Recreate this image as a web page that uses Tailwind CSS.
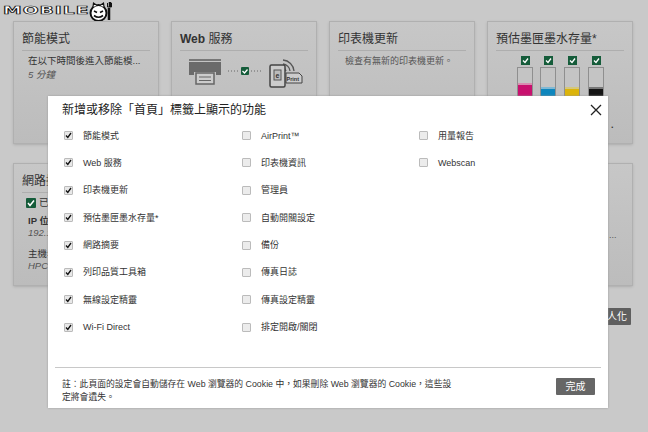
<!DOCTYPE html>
<html lang="zh-Hant">
<head>
  <meta charset="UTF-8" />
  <title>HP EWS</title>
  <script src="https://cdn.jsdelivr.net/npm/@tailwindcss/browser@4"></script>
</head>
<body class="relative w-[648px] h-[432px] overflow-hidden bg-[#c9c9c9] text-[#333] font-['Liberation_Sans','Noto_Sans_CJK_TC',sans-serif]">
  <!-- Logo -->
  <div class="flex items-start h-[21px] pl-[3px]">
    <div class="w-[85px] h-[12px] mt-[5px]">
      <span class="block w-[50px] origin-left scale-x-[1.7] text-[11px] leading-[12px] font-bold tracking-[0.6px] text-white [-webkit-text-stroke:0.7px_#111] [font-family:'DejaVu_Sans',sans-serif]">MOBILE</span>
    </div>
    <svg width="26" height="21" viewBox="0 0 26 21" class="mt-[1px]">
      <circle cx="10.500" cy="12" r="8" fill="#fff" stroke="#111" stroke-width="2"/>
      <path d="M5 6L5.500 2L9 4.500M16 6L15.500 2L12 4.500" fill="#fff" stroke="#111" stroke-width="1.200"/>
      <path d="M6 10l3 1.500M15 10l-3 1.500M6 14.500q4.500 3.500 9 0" fill="none" stroke="#111" stroke-width="1.600"/>
      <path d="M22 1v5M21 7v12" fill="none" stroke="#111" stroke-width="2.500"/>
      <path d="M19.500 2v4h4V2" fill="none" stroke="#111" stroke-width="1"/>
    </svg>
  </div>

  <!-- Cards -->
  <div class="grid grid-cols-[146px_146px_146px_146px] gap-x-3 gap-y-[19px] pl-[13px]">
    <div class="h-[123px] border border-[#b0b0b0] bg-gradient-to-b from-[#c7c7c7] to-[#bcbcbc] px-2 pt-2 shadow-sm">
      <h3 class="text-[12px] leading-[19px] pb-[1px] border-b border-[#aeaeae] text-[#333]">節能模式</h3>
      <p class="mt-[3px] pl-[6px] text-[9.500px] leading-[14px]">在以下時間後進入節能模...</p>
      <p class="pl-[6px] text-[9.500px] leading-[13px] italic text-[#555]">5 分鐘</p>
    </div>
    <div class="h-[123px] border border-[#b0b0b0] bg-gradient-to-b from-[#c7c7c7] to-[#bcbcbc] px-2 pt-2 shadow-sm">
      <h3 class="text-[12px] leading-[19px] pb-[1px] border-b border-[#aeaeae] font-bold">Web <span class="font-normal">服務</span></h3>
      <div class="flex items-start mt-[6px] ml-[9px]">
        <!-- printer -->
        <svg width="33" height="30" viewBox="0 0 33 30" class="mt-[2px]">
          <rect x="0" y="0" width="32" height="2" fill="#777"/>
          <path d="M0 3h32v13h-5v-3H5v3H0z" fill="#6a6a6a"/>
          <rect x="7" y="14" width="18" height="11" fill="#ccc" stroke="#666" stroke-width="1.500"/>
          <path d="M10 18h12M10 21.500h12" stroke="#666" stroke-width="1"/>
        </svg>
        <div class="flex items-center gap-[2px] mt-[10px] ml-[6px]">
          <svg width="11" height="8" viewBox="0 0 11 8"><path d="M0 4h11" stroke="#666" stroke-width="1" stroke-dasharray="1 2"/></svg>
          <svg width="8" height="8" viewBox="0 0 8 8"><rect width="8" height="8" rx="1" fill="#155c3a"/><path d="M1.500 4l2 2 3-3.500" fill="none" stroke="#fff" stroke-width="1.300"/></svg>
          <svg width="11" height="8" viewBox="0 0 11 8"><path d="M0 4h11" stroke="#666" stroke-width="1" stroke-dasharray="1 2"/></svg>
        </div>
        <!-- phone with print tag -->
        <svg width="34" height="32" viewBox="0 0 34 32" class="ml-[7px]">
          <path d="M14 3a12 12 0 0 1 11 11M14 7a8 8 0 0 1 7 7M14 11a4 4 0 0 1 3 3" fill="none" stroke="#555" stroke-width="1.300"/>
          <rect x="1" y="8" width="15" height="22" rx="1.500" fill="#ccc" stroke="#444" stroke-width="1.500"/>
          <rect x="5" y="13" width="7" height="10" fill="#bbb" stroke="#555"/>
          <text x="6.500" y="21" font-size="7" font-weight="700" fill="#333">e</text>
          <path d="M17 16h13l3 3v7H17z" fill="#ccc" stroke="#444"/>
          <text x="17.500" y="24" font-size="5.500" font-weight="700" fill="#333">Print</text>
        </svg>
      </div>
    </div>
    <div class="h-[123px] border border-[#b0b0b0] bg-gradient-to-b from-[#c7c7c7] to-[#bcbcbc] px-2 pt-2 shadow-sm">
      <h3 class="text-[12px] leading-[19px] pb-[1px] border-b border-[#aeaeae]">印表機更新</h3>
      <p class="mt-[3px] pl-[7px] text-[9px] leading-[14px] text-[#555]">檢查有無新的印表機更新。</p>
    </div>
    <div class="relative h-[123px] border border-[#b0b0b0] bg-gradient-to-b from-[#c7c7c7] to-[#bcbcbc] px-2 pt-2 shadow-sm">
      <h3 class="text-[12px] leading-[19px] pb-[1px] border-b border-[#aeaeae]">預估墨匣墨水存量*</h3>
      <div class="flex mt-[5px] ml-[21px] gap-x-[7px]">
        <div class="flex flex-col items-center w-[16px] gap-[2px]">
          <svg width="9" height="9" viewBox="0 0 9 9"><rect width="9" height="9" fill="#155c3a"/><path d="M2 4.500l2 2 3-4" fill="none" stroke="#fff" stroke-width="1.300"/></svg>
          <div class="w-[16px] h-[60px] border border-[#8f8f8f] bg-[#c4c4c4] pt-[15px]"><div class="h-full bg-[#c8106e] border-t-[2px] border-[#d98bb0]"></div></div>
        </div>
        <div class="flex flex-col items-center w-[16px] gap-[2px]">
          <svg width="9" height="9" viewBox="0 0 9 9"><rect width="9" height="9" fill="#155c3a"/><path d="M2 4.500l2 2 3-4" fill="none" stroke="#fff" stroke-width="1.300"/></svg>
          <div class="w-[16px] h-[60px] border border-[#8f8f8f] bg-[#c4c4c4] pt-[19px]"><div class="h-full bg-[#0e86bd] border-t-[2px] border-[#7fb8d4]"></div></div>
        </div>
        <div class="flex flex-col items-center w-[16px] gap-[2px] ml-[1px]">
          <svg width="9" height="9" viewBox="0 0 9 9"><rect width="9" height="9" fill="#155c3a"/><path d="M2 4.500l2 2 3-4" fill="none" stroke="#fff" stroke-width="1.300"/></svg>
          <div class="w-[16px] h-[60px] border border-[#8f8f8f] bg-[#c4c4c4] pt-[19px]"><div class="h-full bg-[#dcb40a] border-t-[2px] border-[#d4c77c]"></div></div>
        </div>
        <div class="flex flex-col items-center w-[16px] gap-[2px] ml-[1px]">
          <svg width="9" height="9" viewBox="0 0 9 9"><rect width="9" height="9" fill="#155c3a"/><path d="M2 4.500l2 2 3-4" fill="none" stroke="#fff" stroke-width="1.300"/></svg>
          <div class="w-[16px] h-[60px] border border-[#8f8f8f] bg-[#c4c4c4] pt-[19px]"><div class="h-full bg-[#151515] border-t-[2px] border-[#777]"></div></div>
        </div>
      </div>
      <span class="absolute left-[123px] top-[97px] text-[9px] leading-[12px] font-bold">.</span>
    </div>

    <div class="h-[123px] border border-[#b0b0b0] bg-gradient-to-b from-[#c7c7c7] to-[#bcbcbc] px-2 pt-2 shadow-sm">
      <h3 class="text-[12px] leading-[19px] pb-[1px] border-b border-[#aeaeae]">網路摘要</h3>
      <div class="flex items-center gap-[3px] mt-[4px] pl-[4px] text-[10px] leading-[12px]">
        <svg width="10" height="10" viewBox="0 0 10 10"><rect width="10" height="10" rx="1" fill="#155c3a"/><path d="M2 5l2 2.500 4-5" fill="none" stroke="#fff" stroke-width="1.500"/></svg>
        <span>已連線</span>
      </div>
      <p class="mt-[6px] pl-[6px] text-[9.500px] leading-[12px] font-bold">IP 位址</p>
      <p class="pl-[6px] text-[9.500px] leading-[12px] italic text-[#555]">192.168.1.10</p>
      <p class="mt-[9px] pl-[6px] text-[9.500px] leading-[12px]">主機名稱</p>
      <p class="pl-[6px] text-[9.500px] leading-[12px] italic text-[#555]">HPC5</p>
    </div>
    <div class="h-[123px] border border-[#b0b0b0] bg-[#c2c2c2]"></div>
    <div class="h-[123px] border border-[#b0b0b0] bg-[#c2c2c2]"></div>
    <div class="h-[123px] border border-[#b0b0b0] bg-gradient-to-b from-[#c7c7c7] to-[#bcbcbc] shadow-sm pt-[65px] pl-[121px] text-[9px] leading-[12px] text-[#555]">...</div>
  </div>

  <div class="flex justify-end pr-[17px] mt-[22px]">
    <button class="h-[17px] w-[60px] px-1 text-right text-[10px] leading-[17px] text-white bg-[#5f5f5f] rounded-[1px]">個人化</button>
  </div>

  <!-- Modal -->
  <div class="absolute left-[48px] top-[96px] w-[560px] h-[312px] bg-white shadow-[0_0_2px_#999] flex flex-col">
    <div class="flex items-start justify-between h-[31.500px] pl-[14px] pr-[5px] pt-[6px]">
      <h2 class="text-[12px] leading-[17px] text-[#222]">新增或移除「首頁」標籤上顯示的功能</h2>
      <svg width="14" height="14" viewBox="0 0 14 14" class="mt-[1px]"><path d="M2 2l10 10M12 2L2 12" stroke="#222" stroke-width="1.300"/></svg>
    </div>
    <div class="grid grid-cols-[178px_177px_1fr] grid-rows-[repeat(8,27.400px)] grid-flow-col pl-[16px] flex-1 text-[9px] leading-[14px] text-[#333]">
      <label class="flex items-center gap-[10px] h-[16px]"><span class="flex items-center justify-center w-[9px] h-[9px] rounded-[1px] border border-[#bbb] bg-[#e8e8e8]"><svg width="7" height="7" viewBox="0 0 7 7"><path d="M1 3.500l1.800 2L6 1" fill="none" stroke="#111" stroke-width="1.300"/></svg></span>節能模式</label>
      <label class="flex items-center gap-[10px] h-[16px]"><span class="flex items-center justify-center w-[9px] h-[9px] rounded-[1px] border border-[#bbb] bg-[#e8e8e8]"><svg width="7" height="7" viewBox="0 0 7 7"><path d="M1 3.500l1.800 2L6 1" fill="none" stroke="#111" stroke-width="1.300"/></svg></span>Web 服務</label>
      <label class="flex items-center gap-[10px] h-[16px]"><span class="flex items-center justify-center w-[9px] h-[9px] rounded-[1px] border border-[#bbb] bg-[#e8e8e8]"><svg width="7" height="7" viewBox="0 0 7 7"><path d="M1 3.500l1.800 2L6 1" fill="none" stroke="#111" stroke-width="1.300"/></svg></span>印表機更新</label>
      <label class="flex items-center gap-[10px] h-[16px]"><span class="flex items-center justify-center w-[9px] h-[9px] rounded-[1px] border border-[#bbb] bg-[#e8e8e8]"><svg width="7" height="7" viewBox="0 0 7 7"><path d="M1 3.500l1.800 2L6 1" fill="none" stroke="#111" stroke-width="1.300"/></svg></span>預估墨匣墨水存量*</label>
      <label class="flex items-center gap-[10px] h-[16px]"><span class="flex items-center justify-center w-[9px] h-[9px] rounded-[1px] border border-[#bbb] bg-[#e8e8e8]"><svg width="7" height="7" viewBox="0 0 7 7"><path d="M1 3.500l1.800 2L6 1" fill="none" stroke="#111" stroke-width="1.300"/></svg></span>網路摘要</label>
      <label class="flex items-center gap-[10px] h-[16px]"><span class="flex items-center justify-center w-[9px] h-[9px] rounded-[1px] border border-[#bbb] bg-[#e8e8e8]"><svg width="7" height="7" viewBox="0 0 7 7"><path d="M1 3.500l1.800 2L6 1" fill="none" stroke="#111" stroke-width="1.300"/></svg></span>列印品質工具箱</label>
      <label class="flex items-center gap-[10px] h-[16px]"><span class="flex items-center justify-center w-[9px] h-[9px] rounded-[1px] border border-[#bbb] bg-[#e8e8e8]"><svg width="7" height="7" viewBox="0 0 7 7"><path d="M1 3.500l1.800 2L6 1" fill="none" stroke="#111" stroke-width="1.300"/></svg></span>無線設定精靈</label>
      <label class="flex items-center gap-[10px] h-[16px]"><span class="flex items-center justify-center w-[9px] h-[9px] rounded-[1px] border border-[#bbb] bg-[#e8e8e8]"><svg width="7" height="7" viewBox="0 0 7 7"><path d="M1 3.500l1.800 2L6 1" fill="none" stroke="#111" stroke-width="1.300"/></svg></span>Wi-Fi Direct</label>

      <label class="flex items-center gap-[10px] h-[16px]"><span class="w-[9px] h-[9px] rounded-[1px] border border-[#bbb] bg-[#ececec]"></span>AirPrint™</label>
      <label class="flex items-center gap-[10px] h-[16px]"><span class="w-[9px] h-[9px] rounded-[1px] border border-[#bbb] bg-[#ececec]"></span>印表機資訊</label>
      <label class="flex items-center gap-[10px] h-[16px]"><span class="w-[9px] h-[9px] rounded-[1px] border border-[#bbb] bg-[#ececec]"></span>管理員</label>
      <label class="flex items-center gap-[10px] h-[16px]"><span class="w-[9px] h-[9px] rounded-[1px] border border-[#bbb] bg-[#ececec]"></span>自動開關設定</label>
      <label class="flex items-center gap-[10px] h-[16px]"><span class="w-[9px] h-[9px] rounded-[1px] border border-[#bbb] bg-[#ececec]"></span>備份</label>
      <label class="flex items-center gap-[10px] h-[16px]"><span class="w-[9px] h-[9px] rounded-[1px] border border-[#bbb] bg-[#ececec]"></span>傳真日誌</label>
      <label class="flex items-center gap-[10px] h-[16px]"><span class="w-[9px] h-[9px] rounded-[1px] border border-[#bbb] bg-[#ececec]"></span>傳真設定精靈</label>
      <label class="flex items-center gap-[10px] h-[16px]"><span class="w-[9px] h-[9px] rounded-[1px] border border-[#bbb] bg-[#ececec]"></span>排定開啟/關閉</label>

      <label class="flex items-center gap-[10px] h-[16px]"><span class="w-[9px] h-[9px] rounded-[1px] border border-[#bbb] bg-[#ececec]"></span>用量報告</label>
      <label class="flex items-center gap-[10px] h-[16px]"><span class="w-[9px] h-[9px] rounded-[1px] border border-[#bbb] bg-[#ececec]"></span>Webscan</label>
    </div>
    <div class="mx-[7px] border-t border-[#c8c8c8] h-[41px] flex items-start justify-between pl-[7px] pr-[6px]">
      <p class="w-[394px] mt-[10px] text-[8.800px] leading-[13px] text-[#333]">註：此頁面的設定會自動儲存在 Web 瀏覽器的 Cookie 中，如果刪除 Web 瀏覽器的 Cookie，這些設定將會遺失。</p>
      <button class="mt-[10px] w-[39px] h-[17px] text-[10px] leading-[17px] text-white bg-[#666] rounded-[1px]">完成</button>
    </div>
  </div>
</body>
</html>
